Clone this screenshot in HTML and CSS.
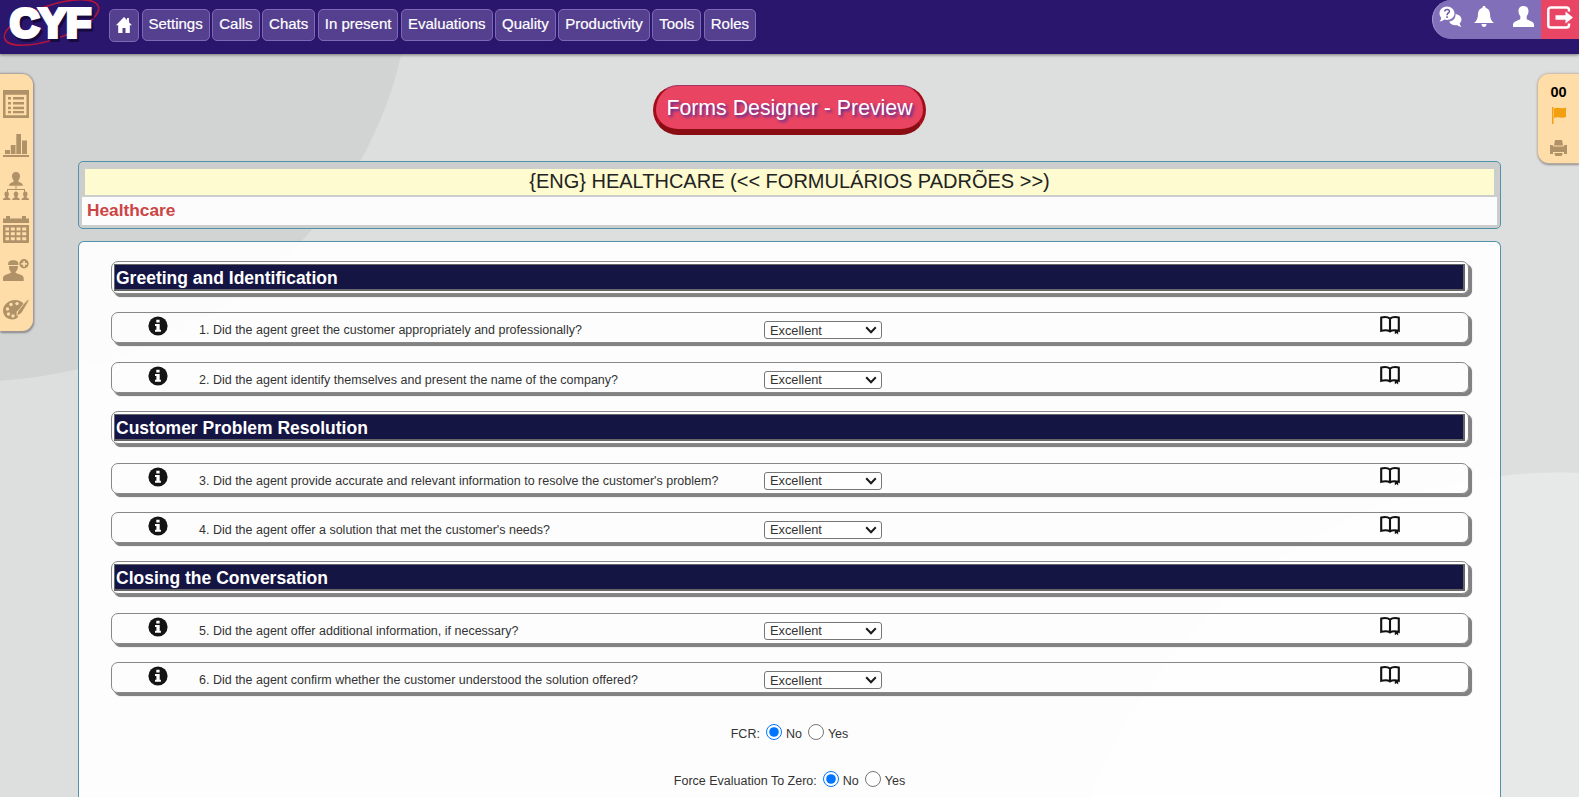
FILE: index.html
```
<!DOCTYPE html>
<html lang="en">
<head>
<meta charset="utf-8">
<title>Forms Designer - Preview</title>
<link rel="stylesheet" href="styles.css">
</head>
<body>
<svg width="0" height="0" class="defs">
  <symbol id="info" viewBox="0 0 20 20"><circle cx="10" cy="10" r="9.6" fill="#141414"/><path d="M8.300 3.800h3.300v2.600H8.300zM7 8h4.700v5.800h1.200v2H7v-2h1.400V10H7z" fill="#fff"/></symbol>
  <symbol id="book" viewBox="0 0 20 19"><path d="M10 2.600C8 1 4 .9 1.200 1.500v13.300C4 14.100 8 14.100 10 15.400c2-1.300 6-1.300 8.800-.6V1.500C16 .9 12 1 10 2.600zM10 2.500v13" fill="none" stroke="#111" stroke-width="2.100"/><path d="M14.800 14h3.400v4.600l-1.700-1.500-1.700 1.100z" fill="#111"/></symbol>
  <symbol id="chevron" viewBox="0 0 12 8"><path d="M1.200 1.300 6 6.200l4.800-4.900" fill="none" stroke="#1a1a1a" stroke-width="2"/></symbol>
</svg>
<header class="topbar">
  <svg class="logo" viewBox="0 0 104 50" width="104" height="50">
    <ellipse cx="51.500" cy="22.500" rx="49.500" ry="17" transform="rotate(-19 51.500 22.500)" fill="none" stroke="#b3143c" stroke-width="1.600"/>
    <text x="12" y="39.500" textLength="81" lengthAdjust="spacingAndGlyphs" class="logo-shade">CYF</text>
    <text x="10" y="37" textLength="81" lengthAdjust="spacingAndGlyphs" class="logo-text">CYF</text>
  </svg>
  <nav class="nav">
    <a class="nav-item home"><svg width="16" height="16" viewBox="0 0 16 16"><path d="M8 0 0 8.300h2.200V16h4.300v-5h3v5h4.300V8.300H16L13 5.200V1h-2v2.100z" fill="#fff"/></svg></a>
    <a class="nav-item">Settings</a>
    <a class="nav-item">Calls</a>
    <a class="nav-item">Chats</a>
    <a class="nav-item">In present</a>
    <a class="nav-item">Evaluations</a>
    <a class="nav-item">Quality</a>
    <a class="nav-item">Productivity</a>
    <a class="nav-item">Tools</a>
    <a class="nav-item">Roles</a>
  </nav>
  <div class="user-tools">
    <svg class="chat" width="23" height="22" viewBox="0 0 23 22"><path d="M16.500 8c3.500.4 6 2.700 6 5.500 0 1.500-.7 2.800-1.800 3.800.2 1.500.8 2.500 1.700 3.400-1.700 0-3-.6-4.200-1.500-3.700.6-7-.8-8-3.700 4-.3 6.700-3.500 6.300-7.500z" fill="#fff"/><path d="M8 .5c4.200 0 7.500 3 7.500 6.800S12.200 14 8 14c-1 0-1.900-.1-2.700-.4C4 14.800 2.500 15.500.5 15.500c1-1 1.600-2 1.700-3.700C1.100 10.600.5 9 .5 7.300.5 3.500 3.800.5 8 .5z" fill="#fff"/><path d="M5.700 5.500c.2-2.800 5-2.600 4.700 0-.2 1.500-2.300 1.500-2.300 3.700M8 10.300v1.700" stroke="#6a57a2" stroke-width="1.500" fill="none"/></svg>
    <svg class="bell" width="20" height="21" viewBox="0 0 20 21"><path d="M10 0c1 0 1.600.7 1.600 1.700C14.500 2.500 16 5 16 8c0 4.500 1.500 7 4 9H0c2.500-2 4-4.500 4-9 0-3 1.500-5.500 4.400-6.300C8.400.7 9 0 10 0zM7.500 18h5c0 1.700-1 3-2.500 3s-2.500-1.300-2.500-3z" fill="#fff"/></svg>
    <svg class="person" width="21" height="21" viewBox="0 0 21 21"><path d="M10.500 0c3.500 0 5 2.300 5 5 0 2-.6 3.800-1.800 5v3c0 1.200 7.300 2 7.300 5.500V21H0v-2.500C0 15 7.300 14.200 7.300 13v-3C6.100 8.800 5.500 7 5.500 5c0-2.700 1.500-5 5-5z" fill="#fff"/></svg>
    <div class="logout"><svg width="27" height="23" viewBox="0 0 27 23"><path d="M22 5.500V4c0-1.600-1-2.600-2.600-2.600H4C2.400 1.400 1.300 2.400 1.300 4v15c0 1.600 1.100 2.600 2.700 2.600h15.400c1.600 0 2.600-1 2.600-2.600v-1.500" fill="none" stroke="#fff" stroke-width="2.500"/><path d="M8.500 9.300h10V5.500l7.500 6-7.500 6v-3.800h-10z" fill="#fff"/></svg></div>
  </div>
</header>

<aside class="dock dock-left">
  <svg width="26" height="28" viewBox="0 0 26 28"><path d="M0 0h26v28H0zM2.500 4.800v20.500h21V4.800z" fill-rule="evenodd"/><path d="M5 7h3v2.500H5zm5 0h11v2.500H10zM5 12h3v2.500H5zm5 0h11v2.500H10zM5 16.800h3v2.500H5zm5 0h11v2.500H10zM5 21h3v2.200H5zm5 0h11v2.200H10z"/></svg>
  <svg width="26" height="23" viewBox="0 0 26 23"><path d="M0 21h26v2H0zM2 16h5v4H2zM7.800 11h4.700v9H7.800zM13.300 0H18v20h-4.700zM19 6.500h5V20h-5z"/></svg>
  <svg width="26" height="28" viewBox="0 0 26 28"><path id="bust" d="M13 0c2.800 0 4 1.800 4 4 0 1.700-.6 3-1.500 4v1.800c1.500.8 4.500 1.500 4.500 4H6c0-2.500 3-3.200 4.500-4V8C9.600 7 9 5.700 9 4c0-2.200 1.200-4 4-4z"/><path d="M12.500 14h1v3h8.500v3h-1v-2H5v2H4v-3h8.500z"/><use href="#bust" transform="translate(-3.600 19.500) scale(.56 .61)"/><use href="#bust" transform="translate(5.700 19.500) scale(.56 .61)"/><use href="#bust" transform="translate(15 19.500) scale(.56 .61)"/></svg>
  <svg width="26" height="27" viewBox="0 0 26 27"><path d="M0 2.500h3V0h4v2.500h12V0h4v2.500h3V7H0zM0 9h26v16.500c0 1-.5 1.500-1.500 1.500h-23C.5 27 0 26.500 0 25.500zm2.500 2.500v3H6v-3zm5.300 0v3h4v-3zm5.700 0v3h4v-3zm5.700 0v3h4v-3zM2.500 16.300v3H6v-3zm5.300 0v3h4v-3zm5.700 0v3h4v-3zm5.700 0v3h4v-3zM2.500 21.200v3H6v-3zm5.300 0v3h4v-3zm5.700 0v3h4v-3zm5.700 0v3h4v-3z" fill-rule="evenodd"/></svg>
  <svg width="26" height="22" viewBox="0 0 26 22"><path d="M5.500 3C6.500.8 14 .8 15 3l.5 3H5zM6 7h9c.1 2.500-.8 4.500-2.300 5.800V14c2.300 1 8 1.800 8 5v3H0v-3c0-3.200 5.500-4 7.800-5v-1.200C6.500 11.500 5.900 9.500 6 7z"/><circle cx="21" cy="4.800" r="4.700"/><path d="M20.200 2h1.700v2h2v1.700h-2v2h-1.700v-2h-2V4h2z" fill="#ffdda8"/></svg>
  <svg width="26" height="21" viewBox="0 0 26 21"><path d="M12 1c4 0 7.500 1.700 9 4.500L16 11c-3 1-3 3-1.500 4.500 2 2-1 5-5 5C4 20.500 0 16.500 0 11.500S5 1 12 1z"/><path d="M25.700.5c.6.500.3 1.300-6.200 12.200-1 1.500-2 2.400-5.500 4 0-2.200.5-3.800 1.600-5.200C23 1.500 25.200.1 25.700.5z" stroke="#ffdda8" stroke-width=".8"/><g fill="#ffdda8"><circle cx="4.500" cy="10" r="1.700"/><circle cx="8" cy="5.500" r="1.700"/><circle cx="14" cy="4.600" r="1.700"/><circle cx="5.500" cy="15" r="1.700"/><circle cx="10" cy="17" r="1.700"/></g></svg>
</aside>

<aside class="dock dock-right">
  <span class="count">00</span>
  <svg class="flag" width="14" height="17" viewBox="0 0 14 17"><path d="M0 0h1.500v17H0z"/><path d="M2 1.500C5.500-.8 9 2.500 14 .5V10c-5 2-8-1.300-12 1z"/></svg>
  <svg width="17" height="16" viewBox="0 0 17 16"><path d="M5 0h7l1 5.500H4zM0 5h2.500l1 1.500h10l1-1.500H17v9h-3v-2H3v2H0zM4.500 13h8v1l-1 2h-6l-1-2z"/></svg>
</aside>

<main class="page">
  <h1 class="title">Forms Designer - Preview</h1>
  <section class="form-head">
    <div class="form-name">{ENG} HEALTHCARE (&lt;&lt; FORMULÁRIOS PADRÕES &gt;&gt;)</div>
    <div class="form-desc">Healthcare</div>
  </section>
  <section class="form-body">
    <div class="group"><h2>Greeting and Identification</h2></div>
    <div class="question"><svg class="info"><use href="#info"/></svg><span class="label">1. Did the agent greet the customer appropriately and professionally?</span><select><option>Excellent</option></select><svg class="chevron"><use href="#chevron"/></svg><svg class="book"><use href="#book"/></svg></div>
    <div class="question"><svg class="info"><use href="#info"/></svg><span class="label">2. Did the agent identify themselves and present the name of the company?</span><select><option>Excellent</option></select><svg class="chevron"><use href="#chevron"/></svg><svg class="book"><use href="#book"/></svg></div>
    <div class="group"><h2>Customer Problem Resolution</h2></div>
    <div class="question"><svg class="info"><use href="#info"/></svg><span class="label">3. Did the agent provide accurate and relevant information to resolve the customer's problem?</span><select><option>Excellent</option></select><svg class="chevron"><use href="#chevron"/></svg><svg class="book"><use href="#book"/></svg></div>
    <div class="question"><svg class="info"><use href="#info"/></svg><span class="label">4. Did the agent offer a solution that met the customer's needs?</span><select><option>Excellent</option></select><svg class="chevron"><use href="#chevron"/></svg><svg class="book"><use href="#book"/></svg></div>
    <div class="group"><h2>Closing the Conversation</h2></div>
    <div class="question"><svg class="info"><use href="#info"/></svg><span class="label">5. Did the agent offer additional information, if necessary?</span><select><option>Excellent</option></select><svg class="chevron"><use href="#chevron"/></svg><svg class="book"><use href="#book"/></svg></div>
    <div class="question"><svg class="info"><use href="#info"/></svg><span class="label">6. Did the agent confirm whether the customer understood the solution offered?</span><select><option>Excellent</option></select><svg class="chevron"><use href="#chevron"/></svg><svg class="book"><use href="#book"/></svg></div>
    <div class="choice"><span class="choice-label">FCR:</span><input type="radio" name="fcr" checked><span class="opt">No</span><input type="radio" name="fcr"><span class="opt">Yes</span></div>
    <div class="choice"><span class="choice-label">Force Evaluation To Zero:</span><input type="radio" name="zero" checked><span class="opt">No</span><input type="radio" name="zero"><span class="opt">Yes</span></div>
  </section>
</main>
</body>
</html>
```
FILE: styles.css
```
* { box-sizing: border-box; }
body {
  display: flex;
  flex-direction: column;
  margin: 0;
  height: 797px;
  overflow: hidden;
  font-family: "Liberation Sans", Arial, sans-serif;
  background:
    radial-gradient(441px 412px at -30px -30px, #d1d4d3 99.8%, transparent 100%),
    radial-gradient(circle at 1560px 975px, #e6e9e8 502px, transparent 503px),
    #dcdfde;
}
svg { display: block; flex: none; }
.defs { position: absolute; }

.topbar {
  display: flex;
  flex: none;
  align-items: flex-start;
  height: 54px;
  background: #2a166d;
  box-shadow: 0 1px 3px #777;
}
.logo-text, .logo-shade {
  font: bold 40px/40px "Liberation Sans", Arial, sans-serif;
  fill: #fff;
  stroke: #fff;
  stroke-width: 4px;
}
.logo-shade { fill: #160a3e; stroke: #160a3e; }
.nav { display: flex; align-items: flex-start; gap: 2.5px; padding: 9px 0 0 5px; }
.nav-item {
  height: 32px;
  padding: 0 6px;
  border: 1px solid #7d69b5;
  border-radius: 5px;
  background: #55408f;
  color: #fff;
  font-size: 15px;
  line-height: 28px;
  white-space: nowrap;
  -webkit-text-stroke: .2px #fff;
}
.nav-item.home { height: 33px; padding: 7px 6px; width: 30px; }
.user-tools {
  display: flex;
  align-items: flex-start;
  margin-left: auto;
  width: 147px;
  height: 39px;
  padding-left: 6px;
  background: #826fb9;
  border-left: 1px solid #a99bd3;
  border-radius: 22px 0 0 22px;
}
.chat { margin-top: 6px; }
.bell { margin: 6px 0 0 12px; }
.person { margin: 6px 0 0 19px; }
.logout { margin-left: auto; width: 38px; height: 39px; padding: 6px 0 0 6px; background: #e94565; }

.dock {
  position: absolute;
  display: flex;
  flex-direction: column;
  background: #ffdda8;
  fill: #b09268;
}
.dock-left {
  left: 0;
  top: 74px;
  width: 33px;
  height: 257px;
  padding: 16px 0 0 3px;
  border-radius: 0 11px 11px 0;
  box-shadow: 0 0 2px 1px #a19a99, 1px 2px 2px #888;
}
.dock-left svg:nth-child(n+2) { margin-top: 16px; }
.dock-left svg:nth-child(3) { margin-top: 15px; }
.dock-left svg:nth-child(6) { margin-top: 18px; }
.dock-right {
  right: 0;
  top: 74px;
  width: 41px;
  height: 89px;
  align-items: center;
  padding-top: 8px;
  border-radius: 11px 0 0 11px;
  box-shadow: 0 0 2px 1px #c5b6a9, 0 2px 2px #888;
}
.count { font: bold 14.500px/20px "Liberation Sans", Arial, sans-serif; color: #000; }
.flag { margin: 5px 0 16px; fill: #f2a010; }

.page { display: flex; flex-direction: column; flex: 1; min-height: 0; padding: 31px 78px 0; }
.title {
  flex: none;
  width: 273px;
  height: 50px;
  margin: 0 auto;
  border: 1px solid #a33665;
  border-bottom: 6px solid #8b0d14;
  border-right: 3px solid #a30d1a;
  border-left: 3px solid #a30d1a;
  border-radius: 26px;
  background: #e94461;
  color: #fff;
  font-size: 21.300px;
  font-weight: normal;
  line-height: 45px;
  text-align: center;
  text-shadow: 2px 2px 3px #4a2ba0;
  white-space: nowrap;
}
.form-head {
  flex: none;
  height: 68px;
  margin-top: 26px;
  padding: 7px 3px 0;
  border: 1px solid #5292a8;
  border-radius: 5px;
  background: #cbcecd;
}
.form-name {
  height: 26px;
  margin: 0 3px 2px;
  background: #fdfbcf;
  color: #222;
  font-size: 20px;
  line-height: 25px;
  text-align: center;
}
.form-desc {
  height: 28px;
  padding-left: 5px;
  background: #fcfcfc;
  color: #cc4545;
  font-size: 17.300px;
  font-weight: bold;
  line-height: 27px;
}
.form-body {
  flex: 1;
  min-height: 0;
  overflow: hidden;
  margin-top: 12px;
  padding: 19px 32px 0;
  border: 1px solid #5292a8;
  border-bottom: 0;
  border-radius: 6px 6px 0 0;
  background: rgba(255, 255, 255, .93);
}
.group, .question {
  width: 1358px;
  border: 1px solid #888;
  border-radius: 7px;
  box-shadow: 3px 3px 0 #828282, 3px 3px 1px #828282;
}
.group { height: 33px; margin-bottom: 18.400px; padding: 2px 3px 0 2px; }
.group h2 {
  height: 27px;
  margin: 0;
  padding-left: 1px;
  border: 1px solid #666;
  border-width: 1px 2px 2px 1px;
  background: #151543;
  color: #fff;
  font-size: 17.500px;
  line-height: 27px;
}
.question { display: flex; align-items: flex-start; height: 31px; margin-bottom: 18.400px; }
.info { width: 20px; height: 20px; margin: 3px 0 0 36px; }
.label { flex: none; width: 565px; margin-left: 31px; color: #333; font-size: 12.500px; line-height: 34px; white-space: nowrap; }
.question select {
  appearance: none;
  flex: none;
  width: 118px;
  height: 18px;
  margin-top: 8px;
  padding: 0 5px;
  border: 1px solid #767676;
  border-radius: 3px;
  background: #fff;
  color: #333;
  font: 12.800px "Liberation Sans", Arial, sans-serif;
}
.chevron { width: 12px; height: 8px; margin: 13px 0 0 -17px; }
.book { width: 20px; height: 19px; margin: 3px 0 0 503px; }
.choice { display: flex; justify-content: center; height: 47px; padding-top: 12px; color: #333; font-size: 12.500px; line-height: 16px; }
.choice input { width: 16px; height: 16px; margin: 0 4px 0 6px; }
.choice span { padding-top: 2px; }
```
